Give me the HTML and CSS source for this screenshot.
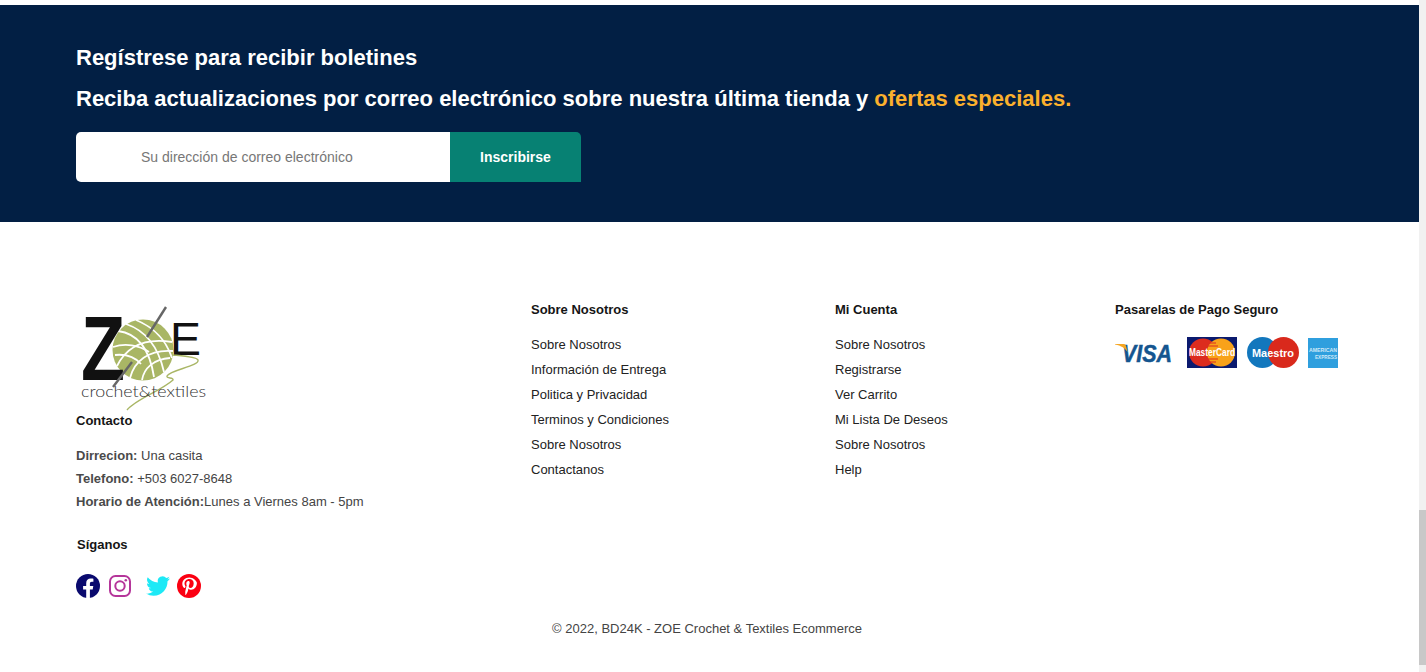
FILE: index.html
```html
<!DOCTYPE html>
<html lang="es">
<head>
    <meta charset="UTF-8">
    <title>ZOE Crochet &amp; Textiles</title>
    <link rel="stylesheet" href="styles.css">
</head>
<body>
<div class="page">
    <section class="newsletter">
        <h2>Regístrese para recibir boletines</h2>
        <h3>Reciba actualizaciones por correo electrónico sobre nuestra última tienda y <span class="accent">ofertas especiales.</span></h3>
        <form class="subscribe">
            <input type="email" placeholder="Su dirección de correo electrónico">
            <button type="button">Inscribirse</button>
        </form>
    </section>

    <footer class="footer">
        <div class="footer-cols">
            <div class="col-contact">
                <svg class="logo" viewBox="0 0 132 108" width="132" height="108" aria-label="ZOE Crochet and Textiles">
                    <circle cx="63" cy="47" r="30.500" fill="#a9b665"/>
                    <g fill="none" stroke="#fff" stroke-width="1.800">
                        <path d="M38 28c16 2 31 14 36 46"/>
                        <path d="M46 21c15 5 31 17 38 48"/>
                        <path d="M56 17c12 5 28 14 36 38"/>
                        <path d="M33 44c12-4 26-2 36 5"/>
                        <path d="M37 63c8-16 24-29 55-24"/>
                        <path d="M50 75c4-16 18-29 43-27"/>
                        <path d="M62 77c2-12 12-21 28-22"/>
                        <path d="M35 52c10-1 20 2 26 9"/>
                    </g>
                    <text class="logo-letter logo-z" x="1" y="77" textLength="44" lengthAdjust="spacingAndGlyphs">Z</text>
                    <text class="logo-letter logo-e" x="90" y="52" textLength="31" lengthAdjust="spacingAndGlyphs">E</text>
                    <path d="M86 4 67 34" stroke="#666" stroke-width="2.400" fill="none"/>
                    <path d="M52 59 33 84" stroke="#666" stroke-width="2.400" fill="none"/>
                    <path d="M93 52c10 1 24 2 25 5 2 6-28 10-31 16-1 3 7 1 6 4-12 11-37 19-46 30" stroke="#a9b665" stroke-width="1.400" fill="none"/>
                    <text class="logo-sub" x="1" y="94" textLength="125" lengthAdjust="spacingAndGlyphs">crochet&amp;textiles</text>
                </svg>
                <h4 class="contact-title">Contacto</h4>
                <p class="contact-line"><b>Dirrecion:</b> Una casita</p>
                <p class="contact-line"><b>Telefono:</b> +503 6027-8648</p>
                <p class="contact-line"><b>Horario de Atención:</b>Lunes a Viernes 8am - 5pm</p>
                <h4 class="follow-title">Síganos</h4>
                <div class="social">
                    <svg class="icon-fb" viewBox="0 0 24 24" width="24" height="24">
                        <circle cx="12" cy="12" r="12" fill="#0a0a6e"/>
                        <path d="M16.700 15.500 17.300 12h-3.400V9.700c0-1 .5-1.900 2-1.900h1.500v-3s-1.400-.2-2.700-.2c-2.700 0-4.500 1.600-4.500 4.600V12H7.100v3.500h3.100V24a12 12 0 0 0 3.700 0v-8.500z" fill="#fff"/>
                    </svg>
                    <svg class="icon-ig" viewBox="0 0 24 24" width="24" height="24" fill="none" stroke="#b5359a" stroke-width="2">
                        <rect x="2" y="2" width="20" height="20" rx="5.500"/>
                        <circle cx="12" cy="12" r="4.700"/>
                        <circle cx="17.800" cy="6.200" r="1.300" fill="#b5359a" stroke="none"/>
                    </svg>
                    <svg class="icon-tw" viewBox="0 0 24 24" width="24" height="24">
                        <path d="M24 4.600a9.800 9.800 0 0 1-2.800.8 4.900 4.900 0 0 0 2.200-2.700 9.800 9.800 0 0 1-3.100 1.200 4.900 4.900 0 0 0-8.400 4.500A14 14 0 0 1 1.700 3.200a4.900 4.900 0 0 0 1.500 6.600 4.900 4.900 0 0 1-2.200-.6v.1a4.900 4.900 0 0 0 3.900 4.800 4.900 4.900 0 0 1-2.200.1 4.900 4.900 0 0 0 4.600 3.400A9.900 9.900 0 0 1 0 19.600a14 14 0 0 0 7.500 2.200c9 0 14-7.500 14-14v-.6A10 10 0 0 0 24 4.600z" fill="#1de9f6"/>
                    </svg>
                    <svg class="icon-pin" viewBox="0 0 24 24" width="24" height="24">
                        <circle cx="12" cy="12" r="12" fill="#fb0012"/>
                        <path d="M12.400 3.500C7.800 3.500 5.300 6.600 5.300 9.900c0 1.600.9 3.500 2.200 4.100.4.200.5.100.6-.2l.4-1.300c0-.2 0-.4-.2-.5-.5-.6-.8-1.400-.8-2.400 0-2.400 1.800-4.600 4.800-4.600 2.600 0 4.400 1.700 4.400 4.200 0 2.800-1.500 4.800-3.300 4.800-1.100 0-1.800-.9-1.600-2 .3-1.200.9-2.600.9-3.500 0-.9-.5-1.500-1.400-1.500-1.100 0-2 1.100-2 2.600 0 1 .4 1.600.4 1.600l-1.300 5.600c-.3 1.100-.1 3 0 4.200l.4.100c.6-1 1.600-2.700 2-3.900l.7-2.700c.4.700 1.500 1.300 2.600 1.300 3.400 0 5.800-3.200 5.800-7C19.100 6.300 16.100 3.500 12.400 3.500z" fill="#fff"/>
                    </svg>
                </div>
            </div>

            <div class="col-about">
                <h4>Sobre Nosotros</h4>
                <ul class="links">
                    <li>Sobre Nosotros</li>
                    <li>Información de Entrega</li>
                    <li>Politica y Privacidad</li>
                    <li>Terminos y Condiciones</li>
                    <li>Sobre Nosotros</li>
                    <li>Contactanos</li>
                </ul>
            </div>

            <div class="col-account">
                <h4>Mi Cuenta</h4>
                <ul class="links">
                    <li>Sobre Nosotros</li>
                    <li>Registrarse</li>
                    <li>Ver Carrito</li>
                    <li>Mi Lista De Deseos</li>
                    <li>Sobre Nosotros</li>
                    <li>Help</li>
                </ul>
            </div>

            <div class="col-pay">
                <h4>Pasarelas de Pago Seguro</h4>
                <div class="cards">
                    <svg class="card-visa" viewBox="0 0 58 22" width="58" height="22">
                        <text class="visa-text" x="7" y="20" textLength="50" lengthAdjust="spacingAndGlyphs">VISA</text>
                        <path d="M0 2h8c1.500 0 2.500.5 3 2l1.500 6C10.500 6.500 6 3.500 0 2.500z" fill="#f5a623"/>
                    </svg>
                    <svg class="card-mc" viewBox="0 0 50 31" width="50" height="31">
                        <rect width="50" height="31" fill="#0b1a6e"/>
                        <circle cx="16" cy="15.500" r="14" fill="#dc2c1e"/>
                        <circle cx="34" cy="15.500" r="14" fill="#f8a21a"/>
                        <path d="M21 6h8M19 9h12M19 22h12M21 25h8" stroke="#dc2c1e" stroke-width="1.200"/>
                        <text class="card-text" x="25" y="19" textLength="46" lengthAdjust="spacingAndGlyphs">MasterCard</text>
                    </svg>
                    <svg class="card-maestro" viewBox="0 0 52 31" width="52" height="31">
                        <circle cx="15.500" cy="15.500" r="15.500" fill="#1277bd"/>
                        <circle cx="36.500" cy="15.500" r="15.500" fill="#d9291c"/>
                        <text class="card-text" x="26" y="20" textLength="42" lengthAdjust="spacingAndGlyphs">Maestro</text>
                    </svg>
                    <svg class="card-amex" viewBox="0 0 30 30" width="30" height="30">
                        <rect width="30" height="30" fill="#2f9fde"/>
                        <text class="amex-text" x="1" y="14" textLength="28" lengthAdjust="spacingAndGlyphs">AMERICAN</text>
                        <text class="amex-text" x="7" y="20.500" textLength="22" lengthAdjust="spacingAndGlyphs">EXPRESS</text>
                    </svg>
                </div>
            </div>
        </div>
        <p class="copyright">© 2022, BD24K - ZOE Crochet &amp; Textiles Ecommerce</p>
    </footer>
</div>
<div class="scrollbar"><div class="scrollbar-thumb"></div></div>
</body>
</html>
```

FILE: styles.css
```css
* { box-sizing: border-box; }
html, body { height: 100%; }
body {
    margin: 0;
    display: flex;
    overflow: hidden;
    background: #fff;
    font-family: "Liberation Sans", Arial, sans-serif;
    color: #222;
}
h2, h3, h4, p, ul { margin: 0; padding: 0; }
ul { list-style: none; }
svg { overflow: visible; }

.page { flex: 1; min-width: 0; padding-top: 5px; }

.scrollbar {
    width: 7px;
    background: #f1f1f1;
    padding-top: 510px;
}
.scrollbar-thumb { height: 155px; background: #c8c8c8; }

.newsletter {
    background: #021f44;
    height: 217px;
    padding: 40px 76px 0;
    color: #fff;
}
.newsletter h2 { font-size: 22px; line-height: 25px; font-weight: bold; }
.newsletter h3 { font-size: 22px; line-height: 25px; font-weight: bold; margin-top: 16px; }
.accent { color: #fbb02d; }

.subscribe { display: flex; margin-top: 21px; width: 505px; height: 50px; }
.subscribe input {
    width: 374px;
    border: 0;
    border-radius: 5px 0 0 5px;
    padding: 0 20px 0 65px;
    font: 14px "Liberation Sans", Arial, sans-serif;
    background: #fff;
}
.subscribe input::placeholder { color: #777; opacity: 1; }
.subscribe button {
    width: 131px;
    border: 0;
    border-radius: 0 5px 0 0;
    background: #078173;
    color: #fff;
    font: bold 14px "Liberation Sans", Arial, sans-serif;
}

.footer { padding: 0 76px; }
.footer-cols {
    display: grid;
    grid-template-columns: 455px 304px 280px 1fr;
    padding-top: 80px;
    height: 399px;
}
.footer h4 { font-size: 13px; line-height: 16px; font-weight: bold; color: #151515; }

.logo { display: block; margin: 1px 0 0 4px; }
.logo-letter { font-family: "Liberation Sans", Arial, sans-serif; font-size: 91px; fill: #111; }
.logo-z { font-weight: bold; }
.logo-e { font-size: 46px; }
.logo-sub { font-family: Lato, "Liberation Sans", sans-serif; font-weight: 300; font-size: 16px; fill: #333; }

.footer .contact-title { margin-top: 2px; }
.contact-line { font-size: 13px; line-height: 23px; color: #444; }
.contact-title + .contact-line { margin-top: 15px; }
.contact-line b { color: #4a4a4a; }
.footer .follow-title { margin: 24px 0 0 1px; }

.social { display: flex; margin-top: 21px; }
.icon-ig { margin-left: 8px; }
.icon-tw { margin-left: 14px; }
.icon-pin { margin-left: 7px; }

.links { margin-top: 14px; }
.links li { font-size: 13px; line-height: 25px; color: #222; }

.cards { display: flex; align-items: center; margin-top: 19px; }
.card-mc { margin-left: 14px; }
.card-maestro { margin-left: 10px; }
.card-amex { margin-left: 9px; }
.visa-text { font: italic bold 24px "Liberation Sans", Arial, sans-serif; fill: #14558f; stroke: #14558f; stroke-width: .5px; }
.card-text { font: bold 10px "Liberation Sans", Arial, sans-serif; fill: #fff; text-anchor: middle; }
.amex-text { font: bold 6px "Liberation Sans", Arial, sans-serif; fill: #cfe9f8; }

.copyright { font-size: 13px; line-height: 16px; color: #444; text-align: center; padding-right: 5px; }
```
